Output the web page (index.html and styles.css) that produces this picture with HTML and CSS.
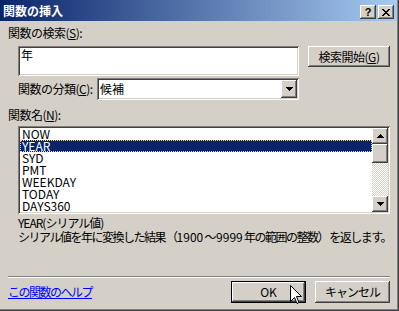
FILE: index.html
```html
<!DOCTYPE html>
<html lang="ja">
<head>
<meta charset="utf-8">
<title>関数の挿入</title>
<link rel="stylesheet" href="styles.css">
</head>
<body>
<div class="window">
  <div class="titlebar">
    <span class="title">関数の挿入</span>
    <div class="tbtns">
      <div class="tbtn q">?</div>
      <div class="tbtn">
        <svg width="8" height="7" viewBox="0 0 8 7" shape-rendering="crispEdges"><path d="M0 0h2v1h1v1h2v-1h1v-1h2v1h-1v1h-1v1h-1v1h1v1h1v1h1v1h-2v-1h-1v-1h-2v1h-1v1h-2v-1h1v-1h1v-1h1v-1h-1v-1h-1v-1h-1z" fill="#000"/></svg>
      </div>
    </div>
  </div>
  <div class="body">
    <div class="lbl">関数の検索(<u>S</u>):</div>
    <div class="search-row">
      <div class="field search">年</div>
      <div class="btn btn-search">検索開始(<u>G</u>)</div>
    </div>
    <div class="cat-row">
      <span class="cat-label">関数の分類(<u>C</u>):</span>
      <div class="field combo">
        <span class="combo-text">候補</span>
        <div class="btn combo-btn">
          <svg width="7" height="4" viewBox="0 0 7 4" shape-rendering="crispEdges"><path d="M0 0h7v1h-1v1h-1v1h-1v1h-1v-1h-1v-1h-1v-1h-1z" fill="#000"/></svg>
        </div>
      </div>
    </div>
    <div class="lbl lbl-list">関数名(<u>N</u>):</div>
    <div class="field listbox">
      <ul class="items">
        <li>NOW</li>
        <li class="sel">YEAR</li>
        <li>SYD</li>
        <li>PMT</li>
        <li>WEEKDAY</li>
        <li>TODAY</li>
        <li>DAYS360</li>
      </ul>
      <div class="scrollbar">
        <div class="btn sb-btn">
          <svg width="7" height="4" viewBox="0 0 7 4" shape-rendering="crispEdges"><path d="M3 0h1v1h1v1h1v1h1v1h-7v-1h1v-1h1v-1h1z" fill="#000"/></svg>
        </div>
        <div class="btn thumb"></div>
        <div class="track"></div>
        <div class="btn sb-btn">
          <svg width="7" height="4" viewBox="0 0 7 4" shape-rendering="crispEdges"><path d="M0 0h7v1h-1v1h-1v1h-1v1h-1v-1h-1v-1h-1v-1h-1z" fill="#000"/></svg>
        </div>
      </div>
    </div>
    <div class="desc">
      <div class="desc-title">YEAR(シリアル値)</div>
      <div class="desc-text">シリアル値を年に変換した結果 （<span class="num">1900</span> ～ <span class="num">9999</span> 年の範囲の整数） を返します。</div>
    </div>
    <div class="sep"></div>
    <div class="footer">
      <a class="help" href="#">この関数のヘルプ</a>
      <div class="btns">
        <div class="btn default">OK</div>
        <div class="btn cancel">キャンセル</div>
      </div>
    </div>
  </div>
  <svg class="cursor" width="12" height="20" viewBox="0 0 12 20"><path d="M0.5 0.5V16.5L4.5 12.5L7 18.5L9 17.5L6.5 11.5H11.5Z" fill="#fff" stroke="#000" stroke-width="1"/></svg>
</div>
</body>
</html>
```

FILE: styles.css
```css
* {
  box-sizing: border-box;
  margin: 0;
  padding: 0;
}

html, body {
  width: 399px;
  height: 311px;
  overflow: hidden;
}

body {
  font-family: "MS UI Gothic", "Noto Sans CJK JP", sans-serif;
  font-size: 12px;
  line-height: 14px;
  color: #000;
  background: #d4d0c8;
}

.window {
  position: relative;
  width: 399px;
  height: 311px;
  background: #d4d0c8;
  border-right: 1px solid #404040;
  border-bottom: 1px solid #404040;
  box-shadow: inset -1px -1px #808080;
  display: flex;
  flex-direction: column;
  overflow: hidden;
}

.titlebar {
  height: 21px;
  margin-right: 1px;
  background: linear-gradient(to right, #0a246a, #a6caf0);
  display: flex;
  align-items: center;
  padding: 0 3px;
  color: #fff;
  font-weight: bold;
}

.title {
  flex: 1;
}

.tbtns {
  display: flex;
  gap: 2px;
  align-self: flex-start;
  margin-top: 5px;
}

.tbtn {
  width: 16px;
  height: 14px;
  background: #d4d0c8;
  box-shadow: inset -1px -1px #404040, inset 1px 1px #fff, inset -2px -2px #808080, inset 2px 2px #d4d0c8;
  display: flex;
  align-items: center;
  justify-content: center;
  color: #000;
}

.tbtn.q {
  font-family: "Liberation Sans", sans-serif;
  font-weight: bold;
  font-size: 11px;
  line-height: 12px;
  padding-bottom: 1px;
}

.body {
  flex: 1;
  padding: 5px 8px 0 8px;
}

.lbl {
  height: 14px;
  white-space: nowrap;
  letter-spacing: -0.5px;
}

.search-row {
  display: flex;
  align-items: flex-start;
  margin-top: 6px;
}

.field {
  background: #fff;
  box-shadow: inset 1px 1px #808080, inset -1px -1px #fff, inset 2px 2px #404040, inset -2px -2px #d4d0c8;
}

.search {
  margin-left: 10px;
  width: 281px;
  height: 30px;
  padding: 2px 3px;
}

.btn {
  background: #d4d0c8;
  box-shadow: inset -1px -1px #404040, inset 1px 1px #fff, inset -2px -2px #808080, inset 2px 2px #d4d0c8;
  display: flex;
  align-items: center;
  justify-content: center;
  white-space: nowrap;
}

.btn-search {
  margin-left: 9px;
  width: 82px;
  height: 21px;
  letter-spacing: -0.5px;
}

.cat-row {
  display: flex;
  align-items: center;
  margin-top: 2px;
  padding-left: 10px;
}

.cat-label {
  flex: none;
  width: 79px;
  white-space: nowrap;
  letter-spacing: -0.5px;
}

.combo {
  flex: none;
  width: 202px;
  height: 22px;
  padding: 2px;
  display: flex;
  align-items: center;
}

.combo-text {
  flex: 1;
  padding-left: 1px;
}

.combo-btn {
  width: 16px;
  height: 18px;
}

.lbl-list {
  margin-top: 8px;
}

.listbox {
  margin-top: 4px;
  margin-left: 10px;
  width: 372px;
  height: 88px;
  padding: 2px;
  display: flex;
}

.items {
  flex: 1;
  list-style: none;
}

.items li {
  height: 12px;
  line-height: 12px;
  padding-left: 2px;
  white-space: nowrap;
}

.items li.sel {
  background: #0a246a;
  color: #fff;
  outline: 1px dotted #f5d98a;
  outline-offset: -1px;
}

.scrollbar {
  width: 16px;
  display: flex;
  flex-direction: column;
}

.sb-btn {
  height: 16px;
}

.thumb {
  height: 19px;
}

.track {
  flex: 1;
  background: repeating-conic-gradient(#fff 0 25%, #d4d0c8 0 50%) 0 0 / 2px 2px;
}

.desc {
  margin-top: 2px;
  margin-left: 10px;
  white-space: nowrap;
}

.desc-title {
  letter-spacing: -1px;
}

.desc-text {
  letter-spacing: -1.5px;
}

.desc-text .num {
  letter-spacing: 0;
}

.sep {
  margin-top: 32px;
  height: 2px;
  border-top: 1px solid #808080;
  border-bottom: 1px solid #fff;
}

.footer {
  margin-top: 3px;
  display: flex;
  align-items: center;
}

.help {
  flex: 1;
  color: #0000ff;
  text-decoration: underline;
  letter-spacing: -1.5px;
  white-space: nowrap;
}

.btns {
  display: flex;
  gap: 9px;
}

.btns .btn {
  width: 75px;
  height: 22px;
}

.btn.cancel {
  letter-spacing: -1px;
}

.btn.default {
  box-shadow: inset 0 0 0 1px #000, inset -2px -2px #404040, inset 2px 2px #fff, inset -3px -3px #808080, inset 3px 3px #d4d0c8;
}

.cursor {
  position: absolute;
  left: 290px;
  top: 285px;
}
```
